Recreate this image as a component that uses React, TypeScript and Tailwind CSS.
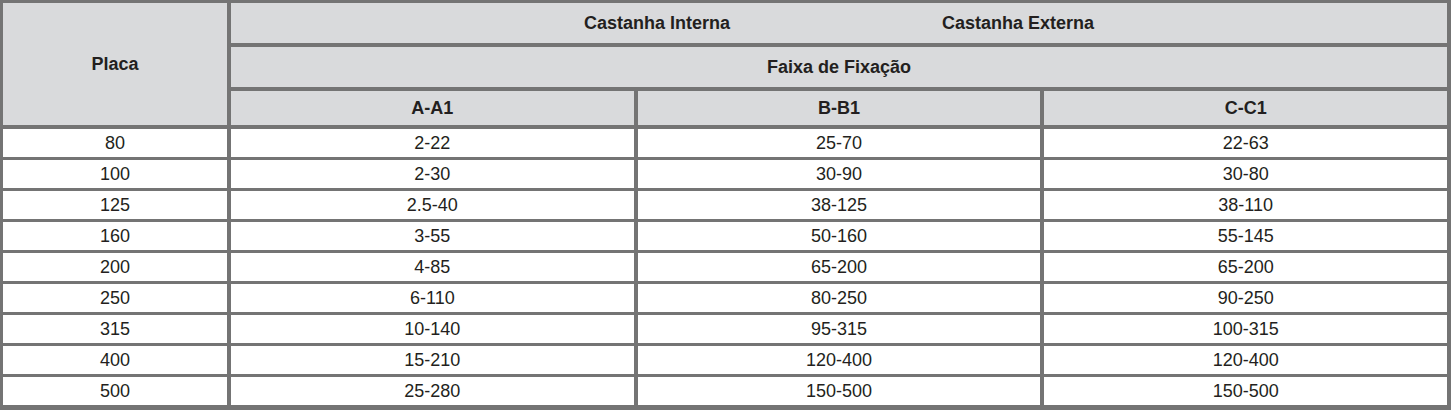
import { FC } from "react";

interface Row {
  placa: string;
  a: string;
  b: string;
  c: string;
}

const rows: Row[] = [
  { placa: "80", a: "2-22", b: "25-70", c: "22-63" },
  { placa: "100", a: "2-30", b: "30-90", c: "30-80" },
  { placa: "125", a: "2.5-40", b: "38-125", c: "38-110" },
  { placa: "160", a: "3-55", b: "50-160", c: "55-145" },
  { placa: "200", a: "4-85", b: "65-200", c: "65-200" },
  { placa: "250", a: "6-110", b: "80-250", c: "90-250" },
  { placa: "315", a: "10-140", b: "95-315", c: "100-315" },
  { placa: "400", a: "15-210", b: "120-400", c: "120-400" },
  { placa: "500", a: "25-280", b: "150-500", c: "150-500" },
];

const headCell = "flex items-center justify-center bg-[#d9dadc] font-bold mb-[1px]";
const dataCell = "flex items-center justify-center bg-white";

const App: FC = () => {
  return (
    <div className="w-[1451px] h-[410px] bg-white font-['Liberation_Sans',Arial,sans-serif] text-[18px] text-[#231f20]">
      <div className="bg-[#747474] pt-[3px] pl-[3px] pr-[4px] pb-[5px]">
        <div className="grid grid-cols-[224px_1fr_1fr_1fr] grid-rows-[41px_41px_35px_repeat(9,28px)] gap-x-[4px] gap-y-[3px]">
          <div className={`${headCell} row-span-3`}>Placa</div>
          <div className={`${headCell} col-span-3 gap-[212px]`}>
            <span>Castanha Interna</span>
            <span>Castanha Externa</span>
          </div>
          <div className={`${headCell} col-span-3`}>Faixa de Fixação</div>
          <div className={headCell}>A-A1</div>
          <div className={headCell}>B-B1</div>
          <div className={headCell}>C-C1</div>

          {rows.map((r) => (
            <div key={r.placa} className="contents">
              <div className={dataCell}>{r.placa}</div>
              <div className={dataCell}>{r.a}</div>
              <div className={dataCell}>{r.b}</div>
              <div className={dataCell}>{r.c}</div>
            </div>
          ))}
        </div>
      </div>
    </div>
  );
};

export default App;
